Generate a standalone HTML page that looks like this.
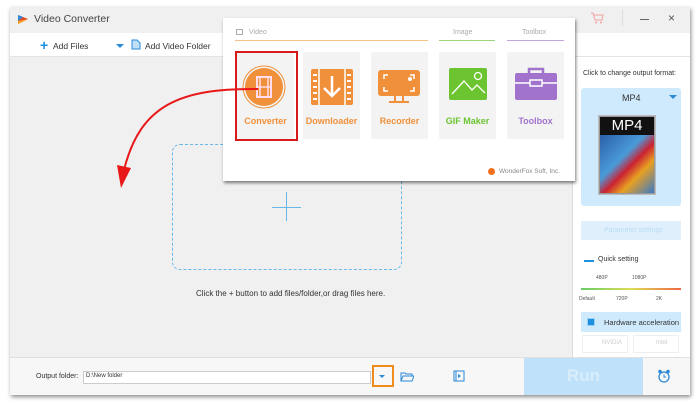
<!DOCTYPE html>
<html><head><meta charset="utf-8"><style>
*{margin:0;padding:0;box-sizing:border-box}
body{width:700px;height:405px;background:#fff;font-family:"Liberation Sans",Arial,sans-serif;position:relative;overflow:hidden}
.a{position:absolute}
.win{left:10px;top:7px;width:680px;height:388px;background:#f0f0f0;box-shadow:1px 2px 4px rgba(0,0,0,.45)}
.t{font-size:8px;color:#333}
.tile{position:absolute;top:52px;width:57px;height:87px;background:#f3f3f3;border-radius:2px}
.tile span{position:absolute;left:0;right:0;top:64px;text-align:center;font-size:9px;font-weight:bold}
</style></head><body>
<div class="a win"></div>
<!-- title bar -->
<div class="a" style="left:10px;top:7px;width:680px;height:26px;background:#f0f0f0"></div>
<svg class="a" style="left:17px;top:13px" width="12" height="12"><path d="M1 2 L11 6 L1 11Z" fill="#e8462b"/><path d="M1 2 L6 4 L1 8Z" fill="#2a8ad8"/><path d="M1 8 L11 6 L1 11Z" fill="#f6a21e"/></svg>
<div class="a" style="left:34px;top:13px;font-size:10.5px;color:#444">Video Converter</div>
<svg class="a" style="left:590px;top:12px" width="14" height="12"><path d="M1 1h2l2 7h7l1-5H4" stroke="#f0a0a0" fill="none"/><circle cx="6" cy="10.5" r="1" fill="#f0a0a0"/><circle cx="11" cy="10.5" r="1" fill="#f0a0a0"/></svg>
<div class="a" style="left:622px;top:10px;width:1px;height:16px;background:#ddd"></div>
<div class="a" style="left:640px;top:19px;width:9px;height:1px;background:#666"></div>
<div class="a" style="left:668px;top:11px;font-size:12px;color:#555">×</div>
<!-- toolbar -->
<div class="a" style="left:10px;top:33px;width:680px;height:24px;background:#fff;border-bottom:1px solid #e4e4e4"></div>
<div class="a" style="left:40px;top:39px;font-size:14px;font-weight:bold;color:#1e90e0;line-height:12px">+</div>
<div class="a t" style="left:53px;top:41px;font-size:8.5px">Add Files</div>
<div class="a" style="left:116px;top:44px;width:0;height:0;border-left:4px solid transparent;border-right:4px solid transparent;border-top:4px solid #2a8ad8"></div>
<svg class="a" style="left:131px;top:39px" width="10" height="11"><path d="M1 1h5l3 3v6H1z" fill="#bfe0f7" stroke="#2a8ad8"/></svg>
<div class="a t" style="left:145px;top:41px;font-size:8.5px">Add Video Folder</div>
<!-- dashed box -->
<div class="a" style="left:172px;top:144px;width:230px;height:126px;border:1.5px dashed #6ab8e8;border-radius:8px"></div>
<div class="a" style="left:272px;top:207px;width:29px;height:1px;background:#6ab8e8"></div>
<div class="a" style="left:286px;top:192px;width:1px;height:29px;background:#6ab8e8"></div>
<div class="a t" style="left:196px;top:289px">Click the + button to add files/folder,or drag files here.</div>
<!-- right panel -->
<div class="a" style="left:572px;top:57px;width:1px;height:300px;background:#ddd"></div>
<div class="a" style="left:573px;top:57px;width:117px;height:300px;background:#fff"></div>
<div class="a" style="left:583px;top:70px;font-size:7px;color:#333">Click to change output format:</div>
<div class="a" style="left:581px;top:88px;width:100px;height:118px;background:#cfeafc;border-radius:3px"></div>
<div class="a" style="left:622px;top:93px;font-size:9px;color:#333">MP4</div>
<div class="a" style="left:669px;top:95px;border-left:4px solid transparent;border-right:4px solid transparent;border-top:4px solid #2a8ad8"></div>
<div class="a" style="left:598px;top:115px;width:58px;height:80px;background:#999;border:1px solid #bbb"></div>
<div class="a" style="left:600px;top:117px;width:54px;height:18px;background:#111;color:#fff;font-size:15px;text-align:center;line-height:18px">MP4</div>
<div class="a" style="left:600px;top:135px;width:54px;height:58px;background:linear-gradient(135deg,#2a5fa8,#4a9ad8 40%,#c23 55%,#e8a020 70%,#3a7ac8)"></div>
<div class="a" style="left:581px;top:221px;width:100px;height:19px;background:#dff0fc"></div>
<div class="a" style="left:604px;top:227px;font-size:7px;color:#b8dcf5">Parameter settings</div>
<div class="a" style="left:584px;top:260px;width:10px;height:1.5px;background:#1e90e0"></div>
<div class="a t" style="left:598px;top:256px;font-size:7px">Quick setting</div>
<div class="a" style="left:596px;top:275px;font-size:5px;color:#555">480P</div>
<div class="a" style="left:632px;top:275px;font-size:5px;color:#555">1080P</div>
<div class="a" style="left:581px;top:288px;width:100px;height:1.5px;background:linear-gradient(90deg,#6c6,#dd5,#e64)"></div>
<div class="a" style="left:579px;top:296px;font-size:5px;color:#555">Default</div>
<div class="a" style="left:616px;top:296px;font-size:5px;color:#555">720P</div>
<div class="a" style="left:656px;top:296px;font-size:5px;color:#555">2K</div>
<div class="a" style="left:581px;top:312px;width:100px;height:20px;background:#cfeafc"></div>
<div class="a" style="left:587px;top:318px;width:8px;height:8px;background:#1e90e0;border:1.5px solid #9ccff5"></div>
<div class="a t" style="left:604px;top:318px;font-size:7.5px">Hardware acceleration</div>
<div class="a" style="left:582px;top:335px;width:46px;height:18px;border:1px solid #eee"></div>
<div class="a" style="left:633px;top:335px;width:46px;height:18px;border:1px solid #eee"></div>
<div class="a" style="left:602px;top:340px;font-size:6px;color:#ccc">NVIDIA</div>
<div class="a" style="left:656px;top:340px;font-size:6px;color:#ccc">Intel</div>
<!-- bottom -->
<div class="a" style="left:10px;top:357px;width:680px;height:38px;background:#f7f7f7;border-top:1px solid #e0e0e0"></div>
<div class="a t" style="left:36px;top:373px;font-size:7px">Output folder:</div>
<div class="a" style="left:83px;top:371px;width:288px;height:13px;background:#fff;border:1px solid #ccc"></div>
<div class="a t" style="left:86px;top:373px;font-size:6px">D:\New folder</div>
<div class="a" style="left:372px;top:365px;width:22px;height:22px;border:2px solid #f08c1e"></div>
<div class="a" style="left:379px;top:375px;border-left:3px solid transparent;border-right:3px solid transparent;border-top:3px solid #2a8ad8"></div>
<svg class="a" style="left:400px;top:371px" width="14" height="11"><path d="M1 2h4l1 1h6v2H3L1 10zM1 10l2-5h11l-2 5z" fill="none" stroke="#2a8ad8"/></svg>
<svg class="a" style="left:453px;top:370px" width="12" height="12"><rect x="1" y="1" width="10" height="10" fill="none" stroke="#2a8ad8"/><path d="M5 4l3 2-3 2z" fill="#2a8ad8"/><path d="M3 1v10" stroke="#2a8ad8"/></svg>
<div class="a" style="left:524px;top:358px;width:119px;height:37px;background:#bfe2fa"></div>
<div class="a" style="left:567px;top:366px;font-size:17px;font-weight:bold;color:#d8edfb">Run</div>
<svg class="a" style="left:657px;top:369px" width="14" height="14"><circle cx="7" cy="8" r="5" fill="none" stroke="#2a8ad8" stroke-width="1.3"/><circle cx="3" cy="2.5" r="1.8" fill="#2a8ad8"/><circle cx="11" cy="2.5" r="1.8" fill="#2a8ad8"/><path d="M7 5.5V8h2" stroke="#2a8ad8" fill="none"/></svg>
<!-- popup -->
<div class="a" style="left:223px;top:18px;width:352px;height:163px;background:#fff;box-shadow:1px 2px 3px rgba(0,0,0,.5)"></div>
<div class="a" style="left:236px;top:29px;width:7px;height:6px;border:1px solid #aaa"></div>
<div class="a" style="left:249px;top:29px;font-size:7px;color:#aaa">Video</div>
<div class="a" style="left:235px;top:40px;width:193px;height:1px;background:#f5c08a"></div>
<div class="a" style="left:453px;top:29px;font-size:7px;color:#aaa">Image</div>
<div class="a" style="left:439px;top:40px;width:56px;height:1px;background:#9bd47a"></div>
<div class="a" style="left:522px;top:29px;font-size:7px;color:#aaa">Toolbox</div>
<div class="a" style="left:507px;top:40px;width:57px;height:1px;background:#c3a5dd"></div>
<div class="tile" style="left:237px"><span style="color:#f0903a">Converter</span></div>
<div class="tile" style="left:303px"><span style="color:#f0903a">Downloader</span></div>
<div class="tile" style="left:371px"><span style="color:#f0903a">Recorder</span></div>
<div class="tile" style="left:439px"><span style="color:#6cc431">GIF Maker</span></div>
<div class="tile" style="left:507px"><span style="color:#a173cc">Toolbox</span></div>
<!-- icons -->
<svg class="a" style="left:242px;top:65px" width="46" height="46"><circle cx="22" cy="22" r="21" fill="none" stroke="#f0903a" stroke-width="1"/><circle cx="22" cy="22" r="19" fill="#f0903a"/><rect x="15" y="12" width="14" height="20" fill="none" stroke="#fde" stroke-width="2"/><path d="M15 22h14M18 12v20M26 12v20" stroke="#fde" stroke-width="1.5"/></svg>
<svg class="a" style="left:311px;top:69px" width="42" height="36"><rect x="0" y="0" width="42" height="36" rx="2" fill="#f0903a"/><path d="M8 0v36M34 0v36" stroke="#fff" stroke-width="1.5"/><path d="M2 6h4M2 12h4M2 18h4M2 24h4M2 30h4M36 6h4M36 12h4M36 18h4M36 24h4M36 30h4" stroke="#fff" stroke-width="2"/><path d="M21 7v20M13 19l8 8 8-8" stroke="#fff" stroke-width="2.5" fill="none"/></svg>
<svg class="a" style="left:378px;top:70px" width="42" height="34"><rect x="0" y="0" width="42" height="26" rx="3" fill="#f0903a"/><path d="M6 9V5h4M36 9V5h-4M6 17v4h4M36 17v4h-4" stroke="#fff" stroke-width="1.5" fill="none"/><circle cx="32" cy="9" r="2" fill="#fff"/><path d="M17 26v5M25 26v5M11 32h20" stroke="#f0903a" stroke-width="2"/></svg>
<svg class="a" style="left:449px;top:68px" width="38" height="32"><rect x="0" y="0" width="38" height="32" rx="2" fill="#6cc431"/><path d="M3 26l12-13 8 9 5-5 8 8" stroke="#fff" stroke-width="1.3" fill="none"/><circle cx="29" cy="8" r="3.5" fill="none" stroke="#fff" stroke-width="1.3"/></svg>
<svg class="a" style="left:515px;top:67px" width="42" height="34"><path d="M14 6V2h14v4" stroke="#a173cc" stroke-width="2.5" fill="none"/><rect x="0" y="6" width="42" height="27" rx="2" fill="#a173cc"/><path d="M0 16h42" stroke="#fff" stroke-width="1.5"/><rect x="15" y="13" width="12" height="6" fill="#a173cc" stroke="#fff" stroke-width="1.5"/></svg>
<div class="a" style="left:488px;top:168px;width:7px;height:7px;border-radius:50%;background:#f0701e"></div>
<div class="a" style="left:499px;top:168px;font-size:6.5px;color:#888">WonderFox Soft, Inc.</div>
<!-- red box & arrow -->
<div class="a" style="left:235px;top:51px;width:63px;height:90px;border:2px solid #d81a1a"></div>
<svg class="a" style="left:0;top:0" width="700" height="405"><path d="M258 89 C180 88 140 105 124 170" stroke="#e81818" stroke-width="2" fill="none"/><path d="M117 165 L121 188 L131 168 Z" fill="#e81818"/></svg>
</body></html>
